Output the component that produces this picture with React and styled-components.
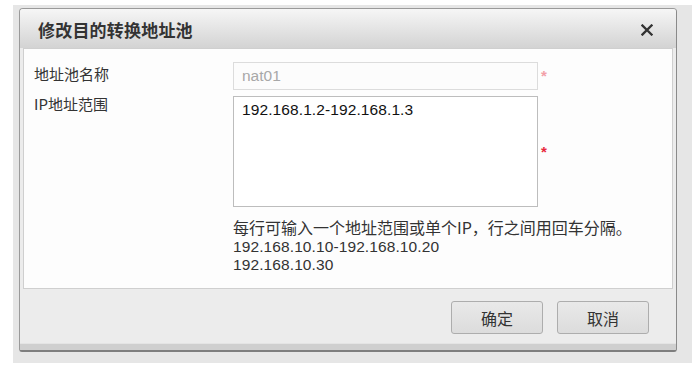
import React from "react";
import styled, { createGlobalStyle } from "styled-components";

const GlobalStyle = createGlobalStyle`
  html, body {
    margin: 0;
    background: #ffffff;
  }
  body {
    font-family: "Liberation Sans", "Noto Sans CJK SC", sans-serif;
  }
`;

const Page = styled.div`
  padding: 5px 6px 6px 13px;
`;

const Backdrop = styled.div`
  background: #e6e6e6;
  padding: 3px 15px 11px 6px;
`;

const Dialog = styled.div`
  background: #ececec;
  border: 1px solid #9a9a9a;
  border-bottom: 2px solid #7e7e7e;
  border-right: 1px solid #8a8a8a;
  border-radius: 4px 4px 3px 3px;
  overflow: hidden;
  display: flex;
  flex-direction: column;
`;

const Header = styled.div`
  height: 39px;
  display: flex;
  align-items: center;
  justify-content: space-between;
  padding: 2px 23px 0 18px;
  box-sizing: border-box;
  background: linear-gradient(#f6f6f6, #d3d3d3);
`;

const Title = styled.h2`
  margin: 0;
  font-family: "Noto Sans CJK SC", sans-serif;
  font-size: 17px;
  font-weight: 700;
  color: #333;
  letter-spacing: 0.2px;
`;

const Close = styled.button`
  border: none;
  background: none;
  padding: 0;
  width: 12px;
  height: 12px;
  display: flex;
  cursor: pointer;
`;

const Body = styled.div`
  margin: 0 3px;
  background: #fdfdfd;
  border: 1px solid #cfcfcf;
  padding: 13px 0 0 10px;
  height: 226px;
  display: grid;
  grid-template-columns: 199px 305px 1fr;
  grid-auto-rows: min-content;
  row-gap: 6px;
  align-content: start;
`;

const Label = styled.div`
  font-family: "Noto Sans CJK SC", sans-serif;
  font-size: 15px;
  color: #333;
  line-height: 20px;
  margin-top: ${(p) => p.$offset || 0}px;
`;

const TextInput = styled.input`
  box-sizing: border-box;
  height: 28px;
  width: 100%;
  border: 1px solid #dcdcdc;
  background: #fcfcfc;
  padding: 0 8px;
  font-family: "Liberation Sans", sans-serif;
  font-size: 15.5px;
  color: #a8a8a8;
  outline: none;
`;

const TextArea = styled.textarea`
  box-sizing: border-box;
  height: 111px;
  width: 100%;
  border: 1px solid #bdbdbd;
  background: #fff;
  padding: 3px 8px;
  font-family: "Liberation Sans", sans-serif;
  font-size: 15.5px;
  letter-spacing: 0.1px;
  line-height: 20px;
  color: #111;
  resize: none;
  outline: none;
`;

const Star = styled.span`
  align-self: center;
  margin: 0 0 6px 3px;
  font-size: 15px;
  font-weight: 700;
  color: ${(p) => (p.$muted ? "#f3a0a8" : "#e8283c")};
  line-height: 1;
  height: 10px;
  overflow: visible;
`;

const Help = styled.div`
  grid-column: 2 / 4;
  margin-top: 4px;
  color: #333;
`;

const HelpLine = styled.div`
  font-family: ${(p) =>
    p.$latin ? '"Liberation Sans", sans-serif' : '"Noto Sans CJK SC", sans-serif'};
  font-size: ${(p) => (p.$latin ? "15.5px" : "16px")};
  letter-spacing: ${(p) => (p.$latin ? "0.1px" : "0")};
  line-height: ${(p) => (p.$latin ? 18 : 21)}px;
`;

const Footer = styled.div`
  height: 54px;
  display: flex;
  justify-content: flex-end;
  align-items: flex-start;
  gap: 14px;
  padding: 12px 27px 0 0;
  box-sizing: border-box;
`;

const Button = styled.button`
  width: 92px;
  height: 33px;
  border: 1px solid #adadad;
  border-radius: 3px;
  background: linear-gradient(#e9e9e9, #dcdcdc);
  font-family: "Noto Sans CJK SC", sans-serif;
  font-size: 16px;
  color: #333;
  cursor: pointer;
`;

const BottomBar = styled.div`
  height: 6px;
  background: #cfcfcf;
  border-top: 1px solid #e4e4e4;
`;

export default function App() {
  return (
    <Page>
      <GlobalStyle />
      <Backdrop>
        <Dialog>
          <Header>
            <Title>修改目的转换地址池</Title>
            <Close aria-label="关闭">
              <svg width="12" height="12" viewBox="0 0 12 12">
                <path
                  d="M1.5 1.5 L10.5 10.5 M10.5 1.5 L1.5 10.5"
                  stroke="#333"
                  strokeWidth="2.3"
                  strokeLinecap="square"
                />
              </svg>
            </Close>
          </Header>
          <Body>
            <Label $offset={2}>地址池名称</Label>
            <TextInput value="nat01" disabled readOnly />
            <Star $muted>*</Star>
            <Label $offset={-2}>IP地址范围</Label>
            <TextArea defaultValue="192.168.1.2-192.168.1.3" />
            <Star>*</Star>
            <Help>
              <HelpLine>每行可输入一个地址范围或单个IP，行之间用回车分隔。</HelpLine>
              <HelpLine $latin>192.168.10.10-192.168.10.20</HelpLine>
              <HelpLine $latin>192.168.10.30</HelpLine>
            </Help>
          </Body>
          <Footer>
            <Button>确定</Button>
            <Button>取消</Button>
          </Footer>
          <BottomBar />
        </Dialog>
      </Backdrop>
    </Page>
  );
}
